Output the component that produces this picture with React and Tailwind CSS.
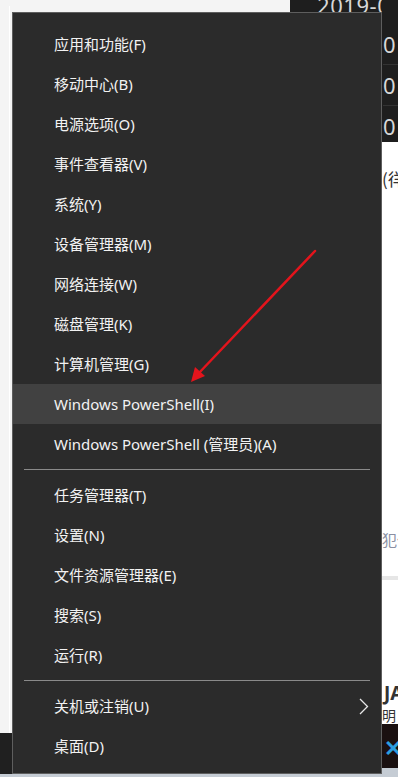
import React from "react";

const groups = [
  ["应用和功能(F)", "移动中心(B)", "电源选项(O)", "事件查看器(V)", "系统(Y)", "设备管理器(M)", "网络连接(W)", "磁盘管理(K)", "计算机管理(G)", "Windows PowerShell(I)", "Windows PowerShell (管理员)(A)"],
  ["任务管理器(T)", "设置(N)", "文件资源管理器(E)", "搜索(S)", "运行(R)"],
  ["关机或注销(U)", "桌面(D)"],
];

function MenuItem({ label, active, sub }) {
  return (
    <div
      className={`flex items-center justify-between h-10 pl-[41px] pr-[12px] text-[15px] text-[#f2f2f2] whitespace-nowrap ${active ? "bg-[#414141]" : ""}`}
    >
      <span>{label}</span>
      {sub && (
        <svg width="10" height="17" viewBox="0 0 10 17">
          <polyline points="1,1 8.5,8.5 1,16" fill="none" stroke="#e8e8e8" strokeWidth="1.3" />
        </svg>
      )}
    </div>
  );
}

export default function App() {
  return (
    <div
      className="relative flex w-[398px] h-[777px] overflow-hidden bg-[#f4f4f4]"
      style={{ fontFamily: '"Noto Sans", "Noto Sans CJK SC", sans-serif' }}
    >
      {/* 左侧桌面 */}
      <div className="flex flex-col w-[12px] shrink-0">
        <div className="h-[733px] flex justify-end pr-[2px] pt-[6px]">
          <div className="w-px h-full bg-white" />
        </div>
        <div className="flex-1 bg-[#202020]" />
      </div>

      {/* 右键菜单所在列 */}
      <div className="flex flex-col w-[370px] shrink-0 pt-[12px]">
        <div className="h-[762px] bg-[#2b2b2b] border border-[#5e5e5e] pt-[11px]">
          {groups.map((g, gi) => (
            <div key={gi}>
              {gi > 0 && (
                <div className="flex items-center h-[11px] px-[11px]">
                  <div className="h-px w-full bg-[#8a8a8a]" />
                </div>
              )}
              {g.map((label) => (
                <MenuItem
                  key={label}
                  label={label}
                  active={label === "Windows PowerShell(I)"}
                  sub={label === "关机或注销(U)"}
                />
              ))}
            </div>
          ))}
        </div>
      </div>

      {/* 右侧窗口边缘 */}
      <div className="flex flex-col w-[16px] shrink-0 bg-white overflow-hidden text-[#333]" style={{ fontFamily: '"Noto Sans CJK SC", sans-serif' }}>
        <div className="flex flex-col h-[142px] bg-[#1e1e1e] pt-[24px] pl-[1px] text-[22px] leading-[40px] text-[#d8d8d8]" style={{ fontFamily: '"Noto Sans", sans-serif' }}>
          <span>0</span>
          <span className="border-t border-[#333]">0</span>
          <span className="border-t border-[#333]">0</span>
        </div>
        <div className="mt-[28px] text-[17px] whitespace-nowrap leading-none">(徉</div>
        <div className="mt-[345px] text-[15px] text-[#8a8fa3] whitespace-nowrap leading-none">犯保</div>
        <div className="mt-[29px] h-[4px] bg-[#e6e6e6]" />
        <div className="mt-[104px] text-[19px] font-bold whitespace-nowrap leading-none pl-[2px]" style={{ fontFamily: '"Noto Sans", sans-serif' }}>JA</div>
        <div className="mt-[5px] text-[14px] whitespace-nowrap leading-none">明</div>
        <div className="mt-[2px] h-[44px] bg-[#1a1010] flex items-center pl-[2px]">
          <span className="text-[22px] font-bold text-[#2a9de0]">✕</span>
        </div>
        <div className="flex-1 bg-[#c5ccd4]" />
      </div>

      {/* 上方窗口露出的日期 */}
      <div className="absolute left-[290px] top-0 w-[92px] h-[12px] bg-[#1e1e1e] overflow-hidden">
        <div className="pl-[27px] -mt-[11px] text-[22px] text-[#d8d8d8] tracking-wide whitespace-nowrap">2019-0</div>
      </div>
      <div className="absolute left-0 bottom-0 w-full h-[3px] bg-[#c5ccd4]" />

      {/* 红色箭头 */}
      <svg className="absolute left-0 top-0" width="398" height="777" viewBox="0 0 398 777">
        <line x1="315" y1="251" x2="198" y2="374" stroke="#e3141c" strokeWidth="2.5" strokeLinecap="round" />
        <polygon points="191,382 195,367 205,376" fill="#e3141c" />
      </svg>
    </div>
  );
}
